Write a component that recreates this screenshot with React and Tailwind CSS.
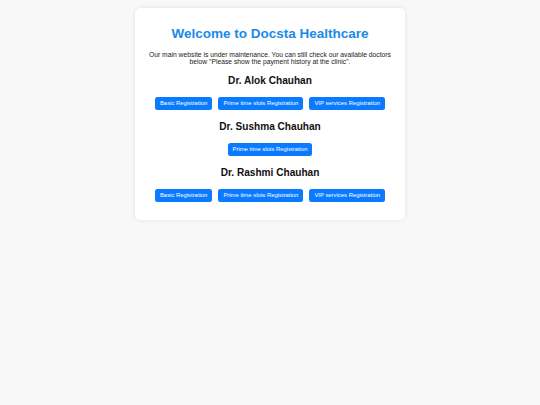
export default function App() {
  const doctors = [
    { name: "Dr. Alok Chauhan", buttons: ["Basic Registration", "Prime time slots Registration", "VIP services Registration"] },
    { name: "Dr. Sushma Chauhan", buttons: ["Prime time slots Registration"] },
    { name: "Dr. Rashmi Chauhan", buttons: ["Basic Registration", "Prime time slots Registration", "VIP services Registration"] },
  ];
  return (
    <div className="min-h-[405px] bg-[#f8f8f8] pt-[8px] font-['Liberation_Sans',Arial,sans-serif]">
      <div className="mx-auto w-[270px] rounded-[5px] bg-white px-[8px] pt-[18px] pb-[18px] text-center shadow-[0_0_4px_rgba(0,0,0,0.1)]">
        <h1 className="text-[13.5px] font-bold leading-[16px] text-[#1a8ae8]">Welcome to Docsta Healthcare</h1>
        <p className="mt-[8.5px] mb-[-1px] text-[6.75px] leading-[7.5px] text-[#222]">
          Our main website is under maintenance. You can still check our available doctors below "Please show the payment history at the clinic".
        </p>
        {doctors.map((d) => (
          <div key={d.name}>
            <h2 className="mt-[9.5px] text-[10.1px] font-bold leading-[14px] text-[#111]">{d.name}</h2>
            <div className="mt-[9px] flex justify-center gap-[6px]">
              {d.buttons.map((b) => (
                <button key={b} className="h-[13.4px] rounded-[2.5px] bg-[#0a7bff] px-[5px] text-[5.9px] leading-[13px] text-white">
                  {b}
                </button>
              ))}
            </div>
          </div>
        ))}
      </div>
    </div>
  );
}
